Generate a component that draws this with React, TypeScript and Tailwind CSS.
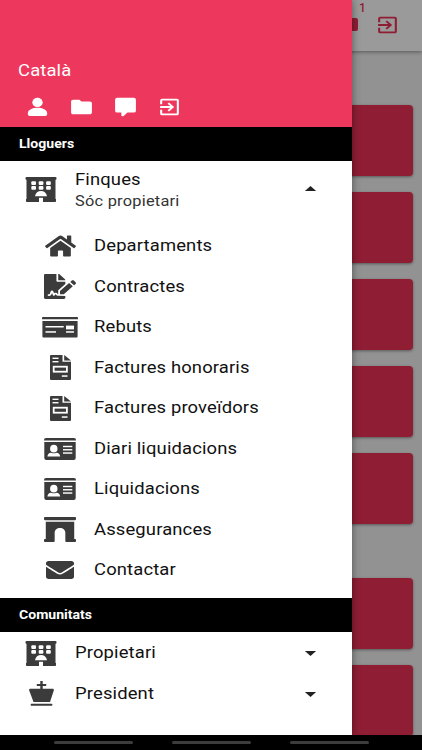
import React from "react";
import {
  FaArchway,
  FaEnvelope,
  FaFileSignature,
  FaHome,
} from "react-icons/fa";
import {
  MdArrowDropDown,
  MdArrowDropUp,
  MdExitToApp,
  MdFolder,
} from "react-icons/md";

type IconProps = React.SVGProps<SVGSVGElement>;

interface MenuItem {
  label: string;
  icon: React.ComponentType<any>;
  size: string;
}

const HotelIcon = (props: IconProps) => (
  <svg viewBox="0 0 32 25" fill="currentColor" {...props}>
    <rect x="0.5" width="31" height="2.800" rx="1" />
    <path d="M1.500 1.500h29V23h-29z" />
    <path d="M1 22h13v3H1.500a1 1 0 0 1-.5-1zM18 22h13v2a1 1 0 0 1-.5 1H18z" />
    <g fill="#fff">
      {[6.3, 13.7, 21.1].map((x) => (
        <React.Fragment key={x}>
          <rect x={x} y="4.200" width="4.700" height="3.800" rx="1" />
          <rect x={x} y="9" width="4.700" height="3.800" rx="1" />
        </React.Fragment>
      ))}
      <path d="M10 19.200c.6-3.400 3-5.200 6-5.200s5.400 1.800 6 5.200z" />
      <path d="M14 20.800h4V25h-4z" />
    </g>
  </svg>
);

const MoneyCheckIcon = (props: IconProps) => (
  <svg viewBox="0 0 36 21" fill="currentColor" {...props}>
    <path d="M0 2.200V1a1 1 0 0 1 1-1h34a1 1 0 0 1 1 1v1.200z" />
    <path d="M.4 4h35.200v15.500a1 1 0 0 1-1 1H1.400a1 1 0 0 1-1-1z" />
    <g fill="#fff">
      <rect x="3.500" y="9" width="18.200" height="1.500" />
      <rect x="3.500" y="14.200" width="10.500" height="1.500" />
      <rect x="24" y="8.600" width="8" height="3.800" />
      <rect x="24" y="14.200" width="8" height="1.500" />
    </g>
  </svg>
);

const InvoiceIcon = (props: IconProps) => (
  <svg viewBox="0 0 21 25" fill="currentColor" {...props}>
    <path d="M1 0h11.500v6.800H21V24a1 1 0 0 1-1 1H1a1 1 0 0 1-1-1V1a1 1 0 0 1 1-1z" />
    <path d="M14.200 0l6.800 5.400h-6.800z" />
    <g fill="#fff">
      <rect x="2.500" y="2.600" width="6" height="1.400" />
      <rect x="2.500" y="6" width="6" height="1.400" />
      <rect x="11.800" y="20.300" width="5.700" height="1.500" />
    </g>
    <rect x="3.700" y="11.700" width="13.200" height="5" fill="none" stroke="#fff" strokeWidth="1.800" />
  </svg>
);

const IdCardIcon = (props: IconProps) => (
  <svg viewBox="0 0 32 21.500" fill="currentColor" {...props}>
    <path d="M0 2.400V2a2 2 0 0 1 2-2h28a2 2 0 0 1 2 2v.4z" />
    <path d="M.3 4h31.400v15.500a2 2 0 0 1-2 2H2.300a2 2 0 0 1-2-2z" />
    <g fill="#fff">
      <circle cx="9.800" cy="10.400" r="3.700" />
      <path d="M3.400 18c.2-2.400 1.700-3.700 3.700-3.700 1.800.8 3.600.8 5.400 0 2 0 3.500 1.300 3.700 3.700z" />
      <rect x="19" y="7.600" width="9.300" height="1.400" />
      <rect x="19" y="10.800" width="9.300" height="1.400" />
      <rect x="19" y="14" width="9.300" height="1.400" />
    </g>
  </svg>
);

const KingIcon = (props: IconProps) => (
  <svg viewBox="0 0 25 25" fill="currentColor" {...props}>
    <path d="M11.300 0h2.400v2.900h3.500v2.200h-3.500v2.700h9.800c1 0 1.600.7 1.300 1.600L21 21H4.500L.2 9.400C-.1 8.500.5 7.800 1.500 7.800h9.800V5.100H7.800V2.900h3.500z" />
    <rect x="1.800" y="22.700" width="21.400" height="2" rx=".5" />
  </svg>
);

const AccountIcon = () => (
  <svg viewBox="0 0 24 24" preserveAspectRatio="none" fill="currentColor" className="h-[22px] w-[25px]">
    <circle cx="12" cy="7" r="5" />
    <path d="M12 12.800c4.500 0 9.300 2 9.300 6v1a2 2 0 0 1-2 2H4.700a2 2 0 0 1-2-2v-1c0-4 4.800-6 9.300-6z" />
  </svg>
);

const CommentIcon = () => (
  <svg viewBox="0 0 24 24" preserveAspectRatio="none" fill="currentColor" className="h-[22px] w-[25px]">
    <path d="M9 22a1 1 0 0 1-1-1v-3H4a2 2 0 0 1-2-2V4a2 2 0 0 1 2-2h16a2 2 0 0 1 2 2v12a2 2 0 0 1-2 2h-6.100l-3.700 3.710c-.2.190-.45.290-.7.290H9z" />
  </svg>
);

const finquesItems: MenuItem[] = [
  { label: "Departaments", icon: FaHome, size: "h-[24px] w-[31px]" },
  { label: "Contractes", icon: FaFileSignature, size: "h-[25px] w-[32px]" },
  { label: "Rebuts", icon: MoneyCheckIcon, size: "h-[21px] w-[36px]" },
  { label: "Factures honoraris", icon: InvoiceIcon, size: "h-[25px] w-[21px]" },
  { label: "Factures proveïdors", icon: InvoiceIcon, size: "h-[25px] w-[21px]" },
  { label: "Diari liquidacions", icon: IdCardIcon, size: "h-[22px] w-[32px]" },
  { label: "Liquidacions", icon: IdCardIcon, size: "h-[22px] w-[32px]" },
  { label: "Assegurances", icon: FaArchway, size: "h-[25px] w-[32px]" },
  { label: "Contactar", icon: FaEnvelope, size: "h-[24px] w-[28px]" },
];

const comunitatsItems: MenuItem[] = [
  { label: "Propietari", icon: HotelIcon, size: "h-[25px] w-[32px]" },
  { label: "President", icon: KingIcon, size: "h-[25px] w-[25px]" },
];

const SectionTitle = ({ children }: { children: React.ReactNode }) => (
  <div className="flex h-[34px] shrink-0 items-center bg-black pt-px pl-[19px] text-[12.500px] font-bold text-white">
    <span className="inline-block origin-left scale-x-[1.125]">{children}</span>
  </div>
);

const Label = ({ children }: { children: React.ReactNode }) => (
  <span className="inline-block origin-left scale-x-[1.15] whitespace-nowrap text-[16px] leading-6 tracking-[0.13px] text-[#111]">
    {children}
  </span>
);

const MenuIcon = ({ icon: Icon, size }: { icon: MenuItem["icon"]; size: string }) => (
  <div className="flex w-9 shrink-0 justify-center">
    <Icon preserveAspectRatio="none" className={`text-[#3b3b3b] ${size}`} />
  </div>
);

const Drawer = () => (
  <aside className="absolute top-0 left-0 flex h-[735px] w-[352px] flex-col bg-white shadow-[0_0_8px_rgba(0,0,0,0.45)]">
    <header className="h-[127px] shrink-0 bg-[#ee375c] pt-[59px] text-white">
      <div className="pl-[18px] text-[16px] leading-6">
        <span className="inline-block origin-left scale-x-[1.15] tracking-[0.13px]">Català</span>
      </div>
      <div className="mt-[13px] flex gap-[19px] pl-[25px]">
        <AccountIcon />
        <MdFolder preserveAspectRatio="none" className="h-[22px] w-[25px]" />
        <CommentIcon />
        <MdExitToApp preserveAspectRatio="none" className="h-[22px] w-[25px]" />
      </div>
    </header>

    <SectionTitle>Lloguers</SectionTitle>
    <div className="flex h-[56px] items-center pl-[23px]">
      <MenuIcon icon={HotelIcon} size="h-[25px] w-[32px]" />
      <div className="ml-4 flex flex-1 flex-col pt-px">
        <Label>Finques</Label>
        <span className="-mt-px inline-block origin-left scale-x-[1.17] text-[14px] leading-5 tracking-[0.2px] text-[#333]">
          Sóc propietari
        </span>
      </div>
      <MdArrowDropUp preserveAspectRatio="none" className="mr-7 h-6 w-[27px] text-[#222]" />
    </div>
    <ul className="pt-[9px] pb-[7.500px]">
      {finquesItems.map((item) => (
        <li key={item.label} className="flex h-[40.500px] items-center gap-4 pl-[42px]">
          <MenuIcon icon={item.icon} size={item.size} />
          <Label>{item.label}</Label>
        </li>
      ))}
    </ul>

    <SectionTitle>Comunitats</SectionTitle>
    <ul className="pt-px">
      {comunitatsItems.map((item) => (
        <li key={item.label} className="flex h-[40.500px] items-center pl-[23px]">
          <MenuIcon icon={item.icon} size={item.size} />
          <div className="ml-4 flex flex-1">
            <Label>{item.label}</Label>
          </div>
          <MdArrowDropDown preserveAspectRatio="none" className="mr-7 h-6 w-[27px] text-[#222]" />
        </li>
      ))}
    </ul>
  </aside>
);

const Card = () => (
  <div className="h-[71px] shrink-0 rounded-[4px] bg-[#8f1e34] shadow-[0_1px_3px_rgba(0,0,0,0.4)]" />
);

export default function App() {
  return (
    <div className="relative flex h-[750px] w-[422px] flex-col overflow-hidden bg-[#929292] font-['Roboto',sans-serif]">
      <div className="flex h-[51px] shrink-0 items-center justify-end bg-[#9a9a9a] pr-[22px] text-[#8f1e34] shadow-[0_1px_4px_rgba(0,0,0,0.4)]">
        <div className="relative mr-[17px] mb-[3px] h-[13px] w-5 rounded-[2px] bg-[#8f1e34]">
          <span className="absolute -top-[19px] left-[21px] text-[12px] font-medium">1</span>
        </div>
        <MdExitToApp preserveAspectRatio="none" className="mb-px h-[22px] w-[25px]" />
      </div>
      <main className="flex min-h-0 flex-1 flex-col overflow-hidden pt-[54px] pr-[9px] pl-[9px]">
        <div className="flex flex-col gap-4">
          {[1, 2, 3, 4, 5].map((n) => (
            <Card key={n} />
          ))}
        </div>
        <div className="mt-[54px] flex flex-col gap-4">
          <Card />
          <Card />
        </div>
      </main>
      <Drawer />
      <nav className="relative flex h-[15px] shrink-0 items-center justify-center gap-[39px] bg-black">
        <span className="h-[3px] w-[79px] rounded-full bg-[#3c3c3c]" />
        <span className="h-[3px] w-[79px] rounded-full bg-[#3c3c3c]" />
        <span className="h-[3px] w-[79px] rounded-full bg-[#3c3c3c]" />
      </nav>
    </div>
  );
}
